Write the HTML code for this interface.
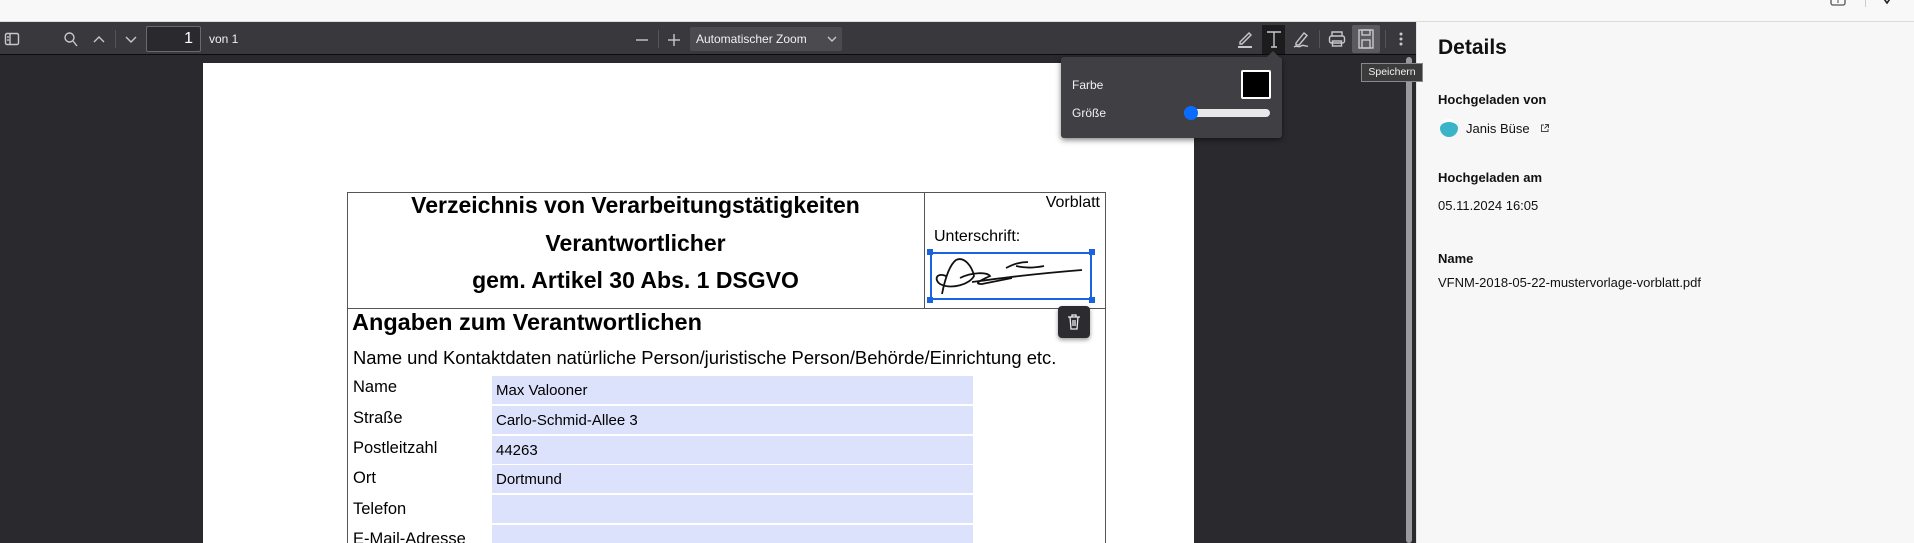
<!DOCTYPE html>
<html><head><meta charset="utf-8"><style>
*{margin:0;padding:0;box-sizing:border-box}
html,body{width:1914px;height:543px;overflow:hidden}
body{background:#f8f8f8;font-family:"Liberation Sans",sans-serif;position:relative}
.a{position:absolute}
.top{left:0;top:0;width:1914px;height:22px;background:#f8f8f8;border-bottom:1px solid #dcdcdc}
.tb{left:0;top:22px;width:1416px;height:33px;background:#38383d;border-bottom:1px solid #0c0c0d}
.view{left:0;top:55px;width:1416px;height:488px;background:#2a2a2e}
.page{left:203px;top:63px;width:991px;height:480px;background:#fff}
.ic{stroke:#c8c8cc;fill:none;stroke-width:1.4}
.t{color:#f1f1f1;font-size:12px}
.side{left:1416px;top:22px;width:498px;height:521px;background:#f7f7f7;border-left:1px solid #e2e2e2}
.b{color:#111}
.fld{position:absolute;left:492px;width:481px;height:28px;background:#dde2fc;font-size:15px;padding-left:4px;line-height:30px;color:#000}
.lbl{position:absolute;left:353px;font-size:16.5px;color:#000}
</style></head><body>
<div class="a top"></div>
<svg class="a" style="left:1828px;top:0" width="20" height="8"><rect x="3" y="-6" width="14" height="11" rx="2" fill="none" stroke="#555" stroke-width="1.3"/><line x1="10" y1="-2" x2="10" y2="3" stroke="#555"/></svg>
<div class="a" style="left:1865px;top:0;width:1px;height:7px;background:#ccc"></div>
<svg class="a" style="left:1880px;top:0" width="14" height="8"><path d="M2 -4L7 3L12 -4" stroke="#222" stroke-width="1.6" fill="none"/></svg>

<div class="a tb"></div>
<svg class="a" style="left:4px;top:31px" width="16" height="16"><rect x="1.5" y="2.5" width="13" height="11" rx="1.5" class="ic"/><line x1="6" y1="3" x2="6" y2="13" class="ic"/><line x1="3" y1="6" x2="5" y2="6" class="ic"/><line x1="3" y1="9" x2="5" y2="9" class="ic"/></svg>
<svg class="a" style="left:63px;top:31px" width="16" height="16"><circle cx="6.5" cy="6.5" r="4.5" class="ic"/><line x1="10" y1="10" x2="14" y2="15" class="ic"/></svg>
<svg class="a" style="left:92px;top:33px" width="14" height="12"><path d="M2 9L7 4L12 9" class="ic" stroke="#77777b"/></svg>
<div class="a" style="left:115px;top:30px;width:1px;height:18px;background:#555"></div>
<svg class="a" style="left:124px;top:33px" width="14" height="12"><path d="M2 4L7 9L12 4" class="ic" stroke="#77777b"/></svg>
<div class="a" style="left:146px;top:26px;width:55px;height:26px;border:1px solid #6a6a6e;background:#2a2a2e;border-radius:2px;color:#fff;font-size:16px;text-align:right;padding-right:7px;line-height:24px">1</div>
<div class="a t" style="left:209px;top:32px">von 1</div>
<svg class="a" style="left:634px;top:32px" width="16" height="16"><line x1="2" y1="8" x2="14" y2="8" class="ic"/></svg>
<div class="a" style="left:658px;top:30px;width:1px;height:18px;background:#555"></div>
<svg class="a" style="left:666px;top:32px" width="16" height="16"><line x1="2" y1="8" x2="14" y2="8" class="ic"/><line x1="8" y1="2" x2="8" y2="14" class="ic"/></svg>
<div class="a" style="left:690px;top:27px;width:152px;height:24px;background:#4a4a4f;border-radius:2px"></div>
<div class="a t" style="left:696px;top:32px">Automatischer Zoom</div>
<svg class="a" style="left:826px;top:34px" width="12" height="10"><path d="M2 3L6 7L10 3" class="ic"/></svg>

<svg class="a" style="left:1236px;top:29px" width="18" height="20"><path d="M4 13L13 4L15 6L6 15H4Z" class="ic"/><line x1="2" y1="18" x2="16" y2="18" stroke="#c8c8cc" stroke-width="2"/></svg>
<div class="a" style="left:1262px;top:25px;width:23px;height:29px;background:#1c1c1f"></div>
<svg class="a" style="left:1264px;top:29px" width="20" height="20"><path d="M3 3H17M10 3V18M7 18H13" class="ic"/></svg>
<svg class="a" style="left:1292px;top:29px" width="18" height="20"><path d="M4 14L12 4L15 6.5L7 16H4Z" class="ic"/><path d="M2 18C5 16 6 19 9 17S13 18 16 17" class="ic" stroke-width="1"/></svg>
<div class="a" style="left:1319px;top:30px;width:1px;height:18px;background:#555"></div>
<svg class="a" style="left:1327px;top:29px" width="20" height="20"><path d="M5 7V3H15V7" class="ic"/><rect x="2.5" y="7" width="15" height="7" rx="2" class="ic"/><rect x="5.5" y="12" width="9" height="5" class="ic"/></svg>
<div class="a" style="left:1352px;top:25px;width:28px;height:28px;background:#5b5b5f;border-radius:2px"></div>
<svg class="a" style="left:1356px;top:28px" width="20" height="22"><rect x="3" y="2" width="14" height="18" class="ic"/><rect x="6" y="2" width="8" height="5" class="ic"/><rect x="6" y="12" width="8" height="8" class="ic"/></svg>
<div class="a" style="left:1385px;top:30px;width:1px;height:18px;background:#555"></div>
<svg class="a" style="left:1396px;top:29px" width="10" height="20"><circle cx="5" cy="5" r="1.5" fill="#c8c8cc"/><circle cx="5" cy="10" r="1.5" fill="#c8c8cc"/><circle cx="5" cy="15" r="1.5" fill="#c8c8cc"/></svg>

<div class="a view"></div>
<div class="a" style="left:1406px;top:57px;width:6px;height:486px;background:#9a9a9e;border-radius:3px"></div>
<div class="a page"></div>

<!-- table -->
<div class="a" style="left:347px;top:192px;width:759px;height:351px;border:1px solid #555;border-bottom:none"></div>
<div class="a" style="left:347px;top:308px;width:759px;height:1px;background:#555"></div>
<div class="a" style="left:924px;top:192px;width:1px;height:117px;background:#555"></div>
<div class="a" style="left:347px;top:187px;width:577px;text-align:center;font-weight:bold;font-size:23px;line-height:37.5px;color:#000">Verzeichnis von Verarbeitungstätigkeiten<br>Verantwortlicher<br>gem. Artikel 30 Abs. 1 DSGVO</div>
<div class="a" style="left:1020px;top:194px;width:80px;text-align:right;font-size:16px;color:#000">Vorblatt</div>
<div class="a" style="left:934px;top:228px;font-size:16px;color:#000">Unterschrift:</div>
<div class="a" style="left:930px;top:252px;width:162px;height:48px;border:2px solid #1a63e0"></div>
<div class="a" style="left:927px;top:249px;width:6px;height:6px;background:#1a63e0"></div>
<div class="a" style="left:1089px;top:249px;width:6px;height:6px;background:#1a63e0"></div>
<div class="a" style="left:927px;top:297px;width:6px;height:6px;background:#1a63e0"></div>
<div class="a" style="left:1089px;top:297px;width:6px;height:6px;background:#1a63e0"></div>
<svg class="a" style="left:932px;top:254px" width="158" height="44"><g fill="none" stroke="#111" stroke-width="1.8"><path d="M10 40C12 30 16 12 24 6C32 2 40 12 42 22C38 30 20 36 8 30C2 26 4 18 14 22"/><path d="M28 24C40 18 55 18 58 22C50 26 40 30 50 30C60 28 70 26 80 24"/><path d="M40 28C70 24 100 20 150 16"/><path d="M74 14C82 10 88 8 96 8"/><path d="M84 12C92 14 102 14 112 12"/></g></svg>
<div class="a" style="left:1058px;top:306px;width:32px;height:32px;background:#2b2b30;border-radius:4px;box-shadow:0 2px 4px rgba(0,0,0,.4)"></div>
<svg class="a" style="left:1066px;top:313px" width="16" height="18"><path d="M2 4H14M6 4V2H10V4M4 4L5 16H11L12 4M7 7V13M9 7V13" stroke="#eee" fill="none" stroke-width="1.3"/></svg>
<div class="a" style="left:352px;top:309px;font-weight:bold;font-size:23.5px;color:#000">Angaben zum Verantwortlichen</div>
<div class="a" style="left:353px;top:347px;font-size:18.4px;color:#000">Name und Kontaktdaten natürliche Person/juristische Person/Behörde/Einrichtung etc.</div>
<div class="lbl" style="top:378px">Name</div><div class="fld" style="top:376px">Max Valooner</div>
<div class="lbl" style="top:409px">Straße</div><div class="fld" style="top:406px">Carlo-Schmid-Allee 3</div>
<div class="lbl" style="top:439px">Postleitzahl</div><div class="fld" style="top:436px">44263</div>
<div class="lbl" style="top:469px">Ort</div><div class="fld" style="top:465px">Dortmund</div>
<div class="lbl" style="top:500px">Telefon</div><div class="fld" style="top:495px"></div>
<div class="lbl" style="top:530px">E-Mail-Adresse</div><div class="fld" style="top:525px;height:18px"></div>

<!-- popup -->
<div class="a" style="left:1061px;top:57px;width:221px;height:81px;background:#3f3f44;border-radius:3px;box-shadow:0 2px 6px rgba(0,0,0,.5)"></div>
<div class="a" style="left:1267px;top:51px;width:0;height:0;border-left:6px solid transparent;border-right:6px solid transparent;border-bottom:6px solid #3f3f44"></div>
<div class="a t" style="left:1072px;top:78px">Farbe</div>
<div class="a" style="left:1241px;top:70px;width:30px;height:29px;background:#fff;border-radius:2px"></div>
<div class="a" style="left:1243px;top:72px;width:26px;height:25px;background:#000"></div>
<div class="a t" style="left:1072px;top:106px">Größe</div>
<div class="a" style="left:1184px;top:109px;width:86px;height:8px;background:#e8e8e8;border-radius:4px"></div>
<div class="a" style="left:1184px;top:106px;width:14px;height:14px;background:#0a6cff;border-radius:50%"></div>

<!-- side panel -->
<div class="a side"></div>
<div class="a" style="left:1438px;top:36px;font-size:21px;font-weight:bold;color:#111">Details</div>
<div class="a b" style="left:1438px;top:92px;font-size:13px;font-weight:bold">Hochgeladen von</div>
<div class="a" style="left:1440px;top:119px;width:18px;height:18px;border-radius:50%;background:#3bb4c9;border-top:3px solid #fff"></div>
<div class="a b" style="left:1466px;top:121px;font-size:13px">Janis Büse</div>
<svg class="a" style="left:1540px;top:123px" width="10" height="10"><path d="M4 2H1.5V8.5H8V6M5 1.5H8.5V5M8.5 1.5L4.5 5.5" stroke="#444" fill="none"/></svg>
<div class="a b" style="left:1438px;top:170px;font-size:13px;font-weight:bold">Hochgeladen am</div>
<div class="a b" style="left:1438px;top:198px;font-size:13px">05.11.2024 16:05</div>
<div class="a b" style="left:1438px;top:251px;font-size:13px;font-weight:bold">Name</div>
<div class="a b" style="left:1438px;top:275px;font-size:13px">VFNM-2018-05-22-mustervorlage-vorblatt.pdf</div>

<!-- tooltip -->
<div class="a" style="left:1361px;top:63px;width:62px;height:19px;background:#3b3b3b;border:1px solid #888;color:#f1f1f1;font-size:10.5px;line-height:17px;text-align:center">Speichern</div>
</body></html>
